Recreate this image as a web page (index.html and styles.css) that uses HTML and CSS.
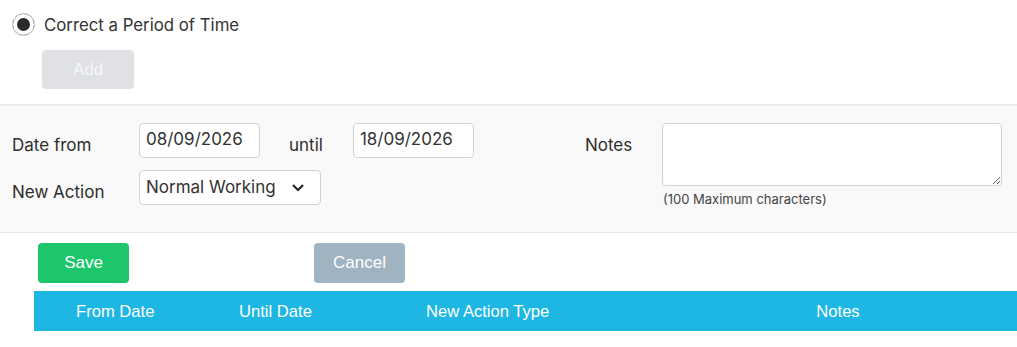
FILE: index.html
```html
<!DOCTYPE html>
<html lang="en">

<head>
    <meta name="viewport" content="width=device-width, initial-scale=1.0">
    <title>Correct a Period of Time</title>
    <link rel="stylesheet" href="styles.css">
</head>

<body>
    <div class="top">
        <label class="radio-row">
            <input type="radio" name="mode" checked>
            <span>Correct a Period of Time</span>
        </label>
        <button class="btn btn-add" disabled>Add</button>
    </div>

    <div class="panel">
        <div class="fields">
            <div class="row">
                <label class="lbl" for="from">Date from</label>
                <input type="text" id="from" class="field date" value="08/09/2026">
                <label class="lbl until" for="until">until</label>
                <input type="text" id="until" class="field date" value="18/09/2026">
            </div>
            <div class="row">
                <label class="lbl" for="action">New Action</label>
                <div class="select">
                    <span>Normal Working</span>
                    <svg width="14" height="9" viewBox="0 0 14 9">
                        <path d="M2 2 L7 7 L12 2" fill="none" stroke="#222" stroke-width="2"/>
                    </svg>
                </div>
            </div>
        </div>
        <div class="notes">
            <label class="lbl" for="notes">Notes</label>
            <div>
                <textarea id="notes" class="field"></textarea>
                <div class="hint">(100 Maximum characters)</div>
            </div>
        </div>
    </div>

    <div class="actions">
        <button class="btn btn-save">Save</button>
        <button class="btn btn-cancel">Cancel</button>
    </div>

    <table class="table">
        <thead>
            <tr>
                <th class="c1">From Date</th>
                <th class="c2">Until Date</th>
                <th class="c3">New Action Type</th>
                <th class="c4">Notes</th>
            </tr>
        </thead>
    </table>
</body>

</html>
```

FILE: styles.css
```css
body {
    margin: 0;
    font-family: Inter, 'Noto Sans', sans-serif;
    color: #333;
    background: #fff;
    overflow: hidden;
}

.top {
    padding: 13px 0 15px 12px;
}

.radio-row {
    display: flex;
    align-items: center;
    gap: 9px;
    font-size: 16.8px;
    color: #333;
}

.radio-row input {
    appearance: none;
    margin: 0;
    width: 23px;
    height: 23px;
    border: 1px solid #d6dae0;
    border-radius: 50%;
    background: #2b2b2b;
    box-shadow: inset 0 0 0 4px #fff;
}

.btn {
    font-family: 'Liberation Sans', Arial, sans-serif;
    font-size: 17px;
    color: #fff;
    border: none;
    border-radius: 4px;
    height: 40px;
    width: 91px;
    padding: 0;
}

.btn-add {
    margin: 14px 0 0 30px;
    height: 39px;
    width: 92px;
    background: #dfe1e4;
    color: #f6f7f8;
}

.panel {
    display: flex;
    background: #f9f9f9;
    border-top: 2px solid #ececec;
    border-bottom: 1px solid #e6e6e6;
    padding: 17px 0 25px 12px;
}

.fields {
    display: flex;
    flex-direction: column;
    gap: 12px;
}

.row {
    display: flex;
    align-items: flex-start;
}

.lbl {
    font-size: 17px;
    font-weight: 400;
    color: #2e2e2e;
    width: 127px;
    padding-top: 12px;
}

.lbl.until {
    width: auto;
    margin: 0 30px 0 29px;
}

.field {
    font-family: Inter, 'Noto Sans', sans-serif;
    font-size: 17px;
    color: #333;
    background: #fff;
    border: 1px solid #cfd3d8;
    border-radius: 4px;
    box-sizing: border-box;
}

.date {
    width: 121px;
    height: 35px;
    padding: 0 0 3px 6px;
}

.select {
    display: flex;
    align-items: center;
    justify-content: space-between;
    width: 182px;
    height: 35px;
    box-sizing: border-box;
    padding: 0 15px 0 6px;
    font-size: 17px;
    background: #fff;
    border: 1px solid #cfd3d8;
    border-radius: 4px;
}

.select span {
    padding-bottom: 2px;
}

.notes {
    display: flex;
    margin-left: 111px;
}

.notes .lbl {
    width: 77px;
}

.notes textarea {
    display: block;
    width: 340px;
    height: 63px;
    resize: both;
}

.hint {
    font-size: 13px;
    color: #444;
    margin: 5px 0 0 1px;
}

.actions {
    display: flex;
    gap: 185px;
    padding: 10px 0 8px 38px;
}

.btn-save {
    background: #1dc66b;
}

.btn-cancel {
    background: #9fb3c0;
}

.table {
    margin-left: 34px;
    width: 983px;
    border-collapse: collapse;
}

.table th {
    height: 40px;
    padding: 1px 0 0 42px;
    background: #1eb6e2;
    color: #fff;
    font-family: 'Liberation Sans', Arial, sans-serif;
    font-size: 16.6px;
    font-weight: normal;
    text-align: left;
    box-sizing: border-box;
}

.table .c1 { width: 163px; }
.table .c2 { width: 187px; }
.table .c3 { width: 275px; }
.table .c4 { padding: 1px 0 0 0; text-align: center; }
```
